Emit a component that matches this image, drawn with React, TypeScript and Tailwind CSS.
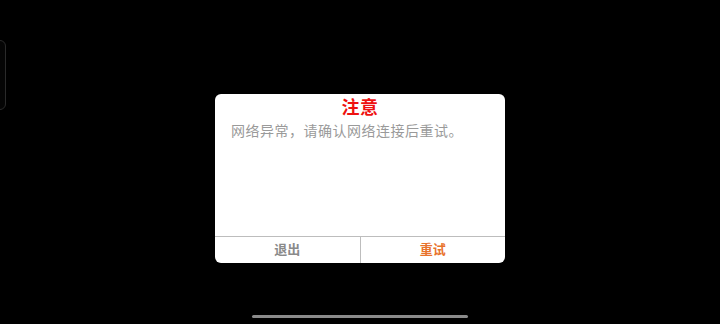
export default function App() {
  const font = { fontFamily: '"Noto Sans CJK SC", "Noto Sans", sans-serif' };
  return (
    <div className="relative w-[720px] h-[324px] bg-black overflow-hidden" style={font}>
      {/* partially visible side panel */}
      <div className="absolute left-[-40px] top-[40px] w-[46px] h-[70px] rounded-[6px] border border-[#2a2a2a] bg-[#050505]" />

      <div className="flex h-full flex-col items-center">
        <div className="mt-[94px] flex h-[169px] w-[290px] flex-col rounded-[6px] bg-white">
          <div className="flex h-[22px] items-end justify-center pt-[2px]">
            <span className="text-[18px] leading-[20px] font-bold tracking-[0.5px] text-[#ee1111]">注意</span>
          </div>
          <div className="flex-1 px-[16px] pt-[5px] text-[14px] leading-[18px] tracking-[0.5px] text-[#9a9a9a]">
            网络异常，请确认网络连接后重试。
          </div>
          <div className="flex h-[27px] border-t border-[#bdbdbd]">
            <button className="flex flex-1 items-center justify-center pb-[3px] text-[13px] font-bold text-[#8a8a8a]">
              退出
            </button>
            <div className="w-px bg-[#bdbdbd]" />
            <button className="flex flex-1 items-center justify-center pb-[3px] text-[13px] font-bold text-[#e8732c]">
              重试
            </button>
          </div>
        </div>
      </div>

      {/* home indicator */}
      <div className="absolute left-[252px] top-[315px] h-[3px] w-[216px] rounded-full bg-[#8a8a8a]" />
    </div>
  );
}
